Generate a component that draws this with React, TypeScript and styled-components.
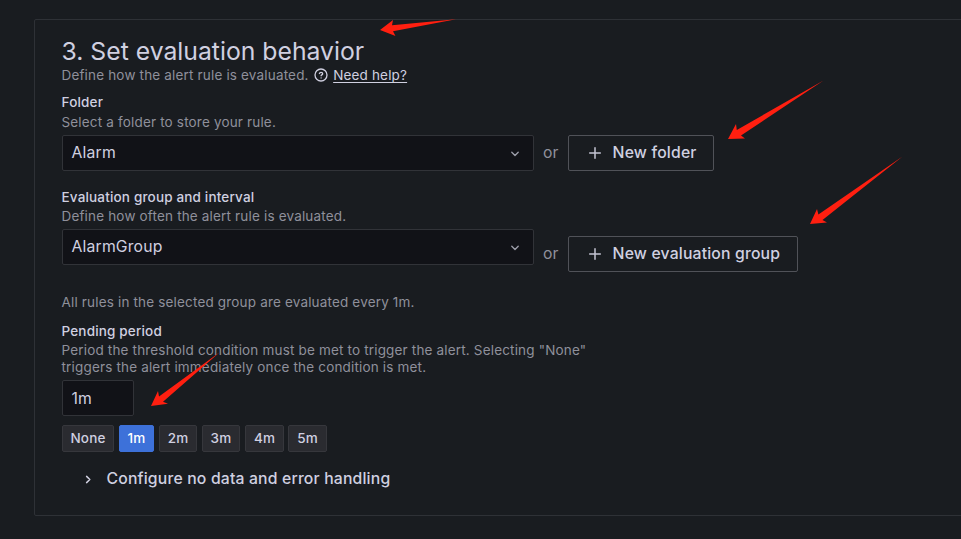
import React from 'react';
import styled, { createGlobalStyle } from 'styled-components';

const GlobalStyle = createGlobalStyle`
  * { box-sizing: border-box; }
  html, body { margin: 0; background: #191c20; overflow: hidden; }
  body { font-family: Inter, "Liberation Sans", sans-serif; color: #d0d0e0; }
`;

const Page = styled.main`
  position: relative;
  width: 961px;
  height: 539px;
  padding: 19px 0 0 34px;
  overflow: hidden;
`;

const Panel = styled.section`
  width: 960px;
  height: 497px;
  padding: 16px 27px 0;
  border: 1px solid #2e3136;
  border-radius: 2px;
`;

const Title = styled.h3`
  margin: 0 0 0 -0.5px;
  height: 31px;
  font-size: 24.75px;
  font-weight: 400;
  line-height: 31px;
  white-space: nowrap;
`;

const HelpRow = styled.div`
  display: flex;
  align-items: center;
  height: 17px;
  margin-bottom: 10px;
`;

const Note = styled.p<{ $gap?: number }>`
  margin: 0 0 ${p => p.$gap ?? 0}px -0.5px;
  color: #8f909b;
  font-size: 13.5px;
  line-height: 17px;
  letter-spacing: 0.169px;
  white-space: nowrap;
`;

const HelpIcon = styled.svg`
  width: 14px;
  height: 14px;
  margin: -1px 5px 0 5.5px;
`;

const HelpLink = styled.a`
  font-size: 13.5px;
  line-height: 17px;
  letter-spacing: 0.169px;
  text-decoration: underline;
  text-underline-offset: 2px;
  text-decoration-skip-ink: none;
`;

const Label = styled.label<{ $gap: number }>`
  display: block;
  margin: 0 0 ${p => p.$gap}px -0.5px;
  font-size: 13.5px;
  font-weight: 500;
  line-height: 17px;
  letter-spacing: 0.169px;
`;

const FieldRow = styled.div<{ $gap: number }>`
  display: flex;
  align-items: flex-start;
  margin-bottom: ${p => p.$gap}px;
`;

const Field = styled.div<{ $width: number }>`
  display: flex;
  align-items: center;
  justify-content: space-between;
  width: ${p => p.$width}px;
  height: 36px;
  padding: 0 11px 0 8.5px;
  background: #111217;
  border: 1px solid #313338;
  border-radius: 2px;
  font-size: 15.75px;
  letter-spacing: 0.169px;
`;

const Text = styled.span`
  padding-bottom: 2px;
`;

const Alternative = styled.div<{ $drop?: number }>`
  display: flex;
  align-items: center;
  margin-top: ${p => p.$drop ?? 0}px;
`;

const Or = styled.span`
  width: 34px;
  padding: 0 0 2px 9px;
  color: #8f909b;
  font-size: 15.75px;
  letter-spacing: 0.169px;
`;

const OutlineButton = styled.button<{ $width: number }>`
  display: flex;
  align-items: center;
  width: ${p => p.$width}px;
  height: 36px;
  padding: 0 0 0 17px;
  background: transparent;
  border: 1px solid #505258;
  border-radius: 2px;
  color: #d0d0e0;
  font: 500 15.75px Inter, sans-serif;
  letter-spacing: 0.169px;
  white-space: nowrap;

  svg { margin-right: 8.6px; }
`;

const Periods = styled.div`
  display: flex;
  gap: 5px;
  margin: 9px 0 18px;
`;

const PeriodButton = styled.button<{ $width: number; $active: boolean }>`
  width: ${p => p.$width}px;
  height: 27px;
  padding: 0 0 1px;
  background: ${p => (p.$active ? '#3d71d9' : '#2a2b30')};
  border: 1px solid ${p => (p.$active ? '#3d71d9' : '#36373c')};
  border-radius: 2px;
  color: ${p => (p.$active ? '#ffffff' : '#d0d0e0')};
  font: 500 13.5px Inter, sans-serif;
  letter-spacing: 0.169px;

  &:last-child { margin-left: -1px; }
`;

const Collapse = styled.div`
  display: flex;
  align-items: center;
  height: 18px;
  padding-left: 18px;
  font-size: 15.75px;
  font-weight: 500;
  letter-spacing: 0.169px;

  svg { margin-right: 9.5px; }
`;

const Annotations = styled.svg`
  position: absolute;
  inset: 0;
  pointer-events: none;
`;

const ChevronDown = () => (
  <svg width="14" height="14" viewBox="0 0 14 14" fill="none" stroke="#9b9ca8" strokeWidth="1.4" strokeLinecap="round" strokeLinejoin="round">
    <path d="M3.8 6.3 7 9.4l3.2-3.1" />
  </svg>
);

const ChevronRight = () => (
  <svg width="17" height="17" viewBox="0 0 17 17" fill="none" stroke="#d0d0e0" strokeWidth="1.5" strokeLinecap="round" strokeLinejoin="round">
    <path d="m6.6 5.4 3.2 3.1-3.2 3.1" />
  </svg>
);

const Plus = () => (
  <svg width="18" height="18" viewBox="0 0 18 18" fill="none" stroke="#c4c4d2" strokeWidth="1.5" strokeLinecap="round">
    <path d="M9 3.7v10.6M3.7 9h10.6" />
  </svg>
);

const periods = [
  { text: 'None', width: 52 },
  { text: '1m', width: 35 },
  { text: '2m', width: 38 },
  { text: '3m', width: 38 },
  { text: '4m', width: 39 },
  { text: '5m', width: 39 },
];

const arrows = [
  '380,30 393,20 392,25.2 456,19.3 393,31.2 395.5,36',
  '728,139 736,124 736.8,130 823.5,80.5 741,135.5 745,138.5',
  '810,224 817,209 818.4,214.5 902.5,156.5 822.5,220 827,222.5',
  '151,406 158,391 159,396.5 220,352 163,401.7 168,403.8',
];

export default function App() {
  return (
    <>
      <GlobalStyle />
      <Page>
        <Panel>
          <Title>3. Set evaluation behavior</Title>
          <HelpRow>
            <Note>Define how the alert rule is evaluated.</Note>
            <HelpIcon viewBox="0 0 14 14" fill="none" stroke="#d0d0e0" strokeWidth="1.3" strokeLinecap="round">
              <circle cx="7" cy="7" r="6" />
              <path d="M5.4 5.5c.3-.9.9-1.2 1.6-1.2 1 0 1.7.6 1.7 1.4 0 1.1-1.6 1.2-1.6 2.1M7.1 9.8v.1" />
            </HelpIcon>
            <HelpLink>Need help?</HelpLink>
          </HelpRow>

          <Label $gap={3}>Folder</Label>
          <Note $gap={4}>Select a folder to store your rule.</Note>
          <FieldRow $gap={18}>
            <Field $width={472}><Text>Alarm</Text><ChevronDown /></Field>
            <Alternative>
              <Or>or</Or>
              <OutlineButton $width={146}><Plus /><Text>New folder</Text></OutlineButton>
            </Alternative>
          </FieldRow>

          <Label $gap={2}>Evaluation group and interval</Label>
          <Note $gap={4}>Define how often the alert rule is evaluated.</Note>
          <FieldRow $gap={22}>
            <Field $width={472}><Text>AlarmGroup</Text><ChevronDown /></Field>
            <Alternative $drop={7}>
              <Or>or</Or>
              <OutlineButton $width={230}><Plus /><Text>New evaluation group</Text></OutlineButton>
            </Alternative>
          </FieldRow>
          <Note $gap={12}>All rules in the selected group are evaluated every 1m.</Note>

          <Label $gap={2}>Pending period</Label>
          <Note $gap={4}>
            Period the threshold condition must be met to trigger the alert. Selecting "None"<br />
            triggers the alert immediately once the condition is met.
          </Note>
          <Field $width={72}>1m</Field>
          <Periods>
            {periods.map(p => (
              <PeriodButton key={p.text} $width={p.width} $active={p.text === '1m'}>{p.text}</PeriodButton>
            ))}
          </Periods>
          <Collapse><ChevronRight /><Text>Configure no data and error handling</Text></Collapse>
        </Panel>
        <Annotations width="961" height="539" viewBox="0 0 961 539" fill="#ff1f10">
          {arrows.map(points => <polygon key={points} points={points} />)}
        </Annotations>
      </Page>
    </>
  );
}
